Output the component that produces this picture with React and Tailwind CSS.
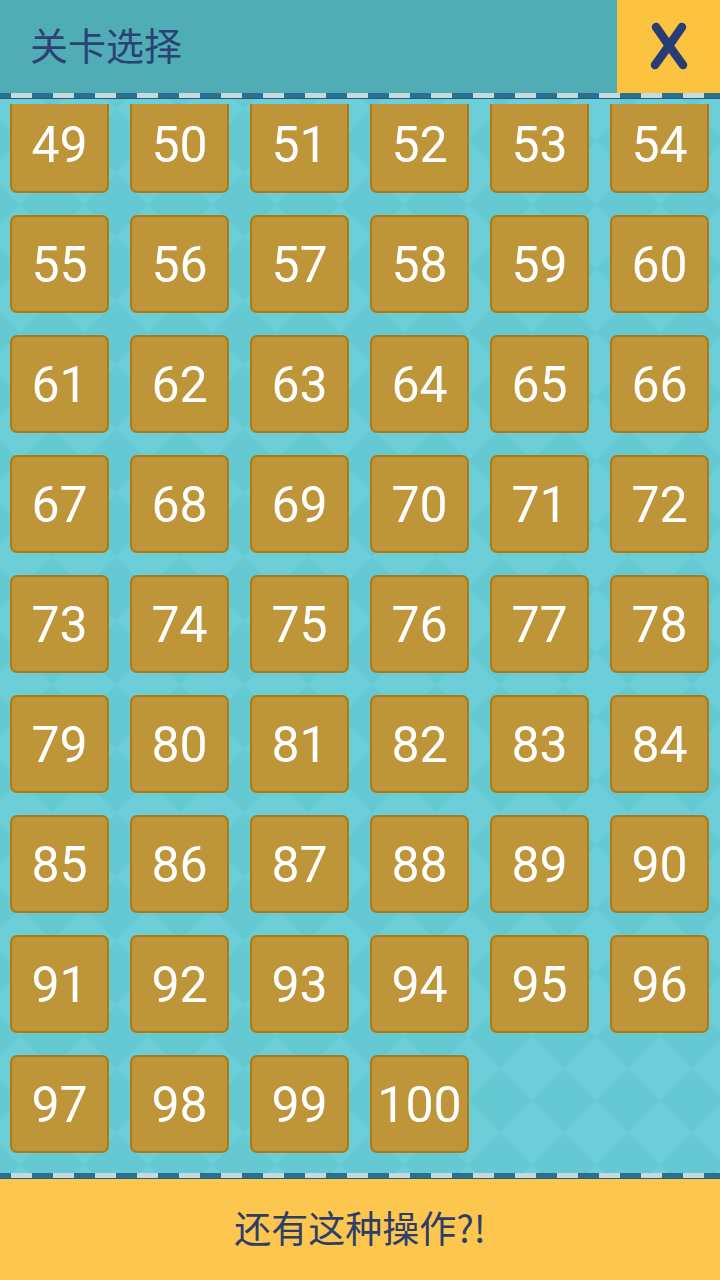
import React from "react";

const levels = Array.from({ length: 52 }, (_, i) => i + 49);

function DashBar() {
  return (
    <div className="h-[6px] w-full bg-[repeating-linear-gradient(90deg,#2c6f8e_0px,#2c6f8e_11px,#c6d9e0_11px,#c6d9e0_32px,#2c6f8e_32px,#2c6f8e_42px)] border-b border-[#245f7a]" />
  );
}

export default function App() {
  return (
    <div className="w-[720px] h-[1280px] flex flex-col overflow-hidden bg-[#6acdd7] font-['Roboto','Noto_Sans_CJK_SC',sans-serif]">
      {/* Header */}
      <header className="h-[93px] flex items-stretch bg-[#50adb6] shrink-0">
        <div className="flex-1 flex items-center pl-[30px] pb-[5px]">
          <span className="text-[38px] text-[#2b4272] font-['Noto_Sans_CJK_SC',sans-serif] leading-none">
            关卡选择
          </span>
        </div>
        <button className="w-[103px] bg-[#fcc340] flex items-center justify-center pb-[2px]">
          <svg width="40" height="50" viewBox="0 0 40 50">
            <path
              d="M7 6 Q20 25 34 44 M33 6 Q20 25 6 44"
              stroke="#283d73"
              strokeWidth="8.5"
              strokeLinecap="round"
              fill="none"
            />
          </svg>
        </button>
      </header>
      <DashBar />

      {/* Level grid */}
      <main className="relative flex-1 flex flex-col pt-[5px]">
        <svg className="absolute inset-0 w-full h-full" aria-hidden="true">
          <defs>
            <pattern id="diamonds" width="64" height="64" patternUnits="userSpaceOnUse" x="20" y="10">
              <rect width="64" height="64" fill="#6bced8" />
              <polygon points="32,0 64,32 32,64 0,32" fill="#65c9d3" />
            </pattern>
          </defs>
          <rect width="100%" height="100%" fill="url(#diamonds)" />
        </svg>
        <div className="relative flex-1 overflow-hidden">
          <div className="grid grid-cols-[repeat(6,99px)] gap-x-[21px] gap-y-[22px] px-[10px] mt-[-9px]">
            {levels.map((n) => (
              <div
                key={n}
                className="h-[98px] rounded-[7px] bg-[#bf9539] border-[2.5px] border-[#ad7a14] flex items-center justify-center pt-[2px] text-white text-[50px] leading-none font-['Roboto',sans-serif]"
              >
                {n}
              </div>
            ))}
          </div>
        </div>
      </main>

      {/* Footer */}
      <DashBar />
      <footer className="h-[101px] shrink-0 bg-[#fcc64f] flex items-center justify-center pb-[4px]">
        <span className="text-[37px] text-[#2d3e6a] font-['Noto_Sans_CJK_SC',sans-serif] leading-none">
          还有这种操作?!
        </span>
      </footer>
    </div>
  );
}
